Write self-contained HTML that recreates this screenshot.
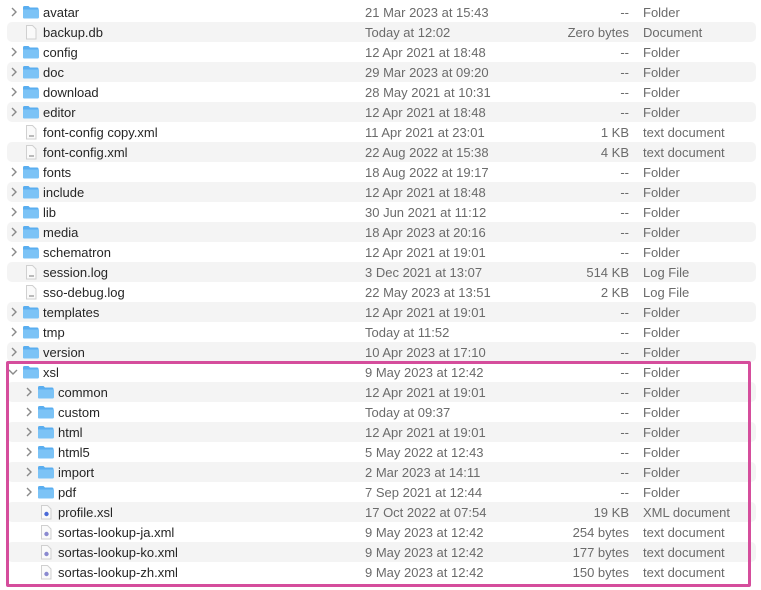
<!DOCTYPE html>
<html><head><meta charset="utf-8"><style>
body{margin:0;width:761px;height:590px;background:#fff;font-family:"Liberation Sans",sans-serif;font-size:13px;color:#262626;position:relative;overflow:hidden}
.r{position:absolute;left:7px;width:749px;height:20px;border-radius:5px}
.s{background:#f4f4f4}
.r span{position:absolute;top:3px;white-space:nowrap}
.d{left:358px;color:#6b6b6b}
.z{right:127px;color:#6b6b6b;text-align:right}
.k{left:636px;color:#6b6b6b}
.ch{position:absolute;top:5px}
.ic{position:absolute;top:2px}
#box{position:absolute;left:6px;top:361px;width:739px;height:220px;border:3px solid #d54d9c;border-radius:2px}
</style></head><body>
<div id="rows"></div>
<div id="box"></div>
<script>
var F=[[0,1,'avatar','21 Mar 2023 at 15:43','--','Folder'],[0,0,'backup.db','Today at 12:02','Zero bytes','Document','b'],[0,1,'config','12 Apr 2021 at 18:48','--','Folder'],[0,1,'doc','29 Mar 2023 at 09:20','--','Folder'],[0,1,'download','28 May 2021 at 10:31','--','Folder'],[0,1,'editor','12 Apr 2021 at 18:48','--','Folder'],[0,0,'font-config copy.xml','11 Apr 2021 at 23:01','1 KB','text document','t'],[0,0,'font-config.xml','22 Aug 2022 at 15:38','4 KB','text document','t'],[0,1,'fonts','18 Aug 2022 at 19:17','--','Folder'],[0,1,'include','12 Apr 2021 at 18:48','--','Folder'],[0,1,'lib','30 Jun 2021 at 11:12','--','Folder'],[0,1,'media','18 Apr 2023 at 20:16','--','Folder'],[0,1,'schematron','12 Apr 2021 at 19:01','--','Folder'],[0,0,'session.log','3 Dec 2021 at 13:07','514 KB','Log File','t'],[0,0,'sso-debug.log','22 May 2023 at 13:51','2 KB','Log File','t'],[0,1,'templates','12 Apr 2021 at 19:01','--','Folder'],[0,1,'tmp','Today at 11:52','--','Folder'],[0,1,'version','10 Apr 2023 at 17:10','--','Folder'],[0,2,'xsl','9 May 2023 at 12:42','--','Folder'],[1,1,'common','12 Apr 2021 at 19:01','--','Folder'],[1,1,'custom','Today at 09:37','--','Folder'],[1,1,'html','12 Apr 2021 at 19:01','--','Folder'],[1,1,'html5','5 May 2022 at 12:43','--','Folder'],[1,1,'import','2 Mar 2023 at 14:11','--','Folder'],[1,1,'pdf','7 Sep 2021 at 12:44','--','Folder'],[1,0,'profile.xsl','17 Oct 2022 at 07:54','19 KB','XML document','x'],[1,0,'sortas-lookup-ja.xml','9 May 2023 at 12:42','254 bytes','text document','x'],[1,0,'sortas-lookup-ko.xml','9 May 2023 at 12:42','177 bytes','text document','x'],[1,0,'sortas-lookup-zh.xml','9 May 2023 at 12:42','150 bytes','text document','x']];
var h='';
F.forEach(function(f,i){
 var o=f[0]*15, y=2+i*20;
 h+='<div class="r'+(i%2?' s':'')+'" style="top:'+y+'px">';
 if(f[1]==1)h+='<svg class="ch" style="left:'+(3+o)+'px" width="8" height="10"><path d="M2 1l4 4-4 4" fill="none" stroke="#8a8a8a" stroke-width="1.4"/></svg>';
 if(f[1]==2)h+='<svg class="ch" style="left:'+(1+o)+'px;top:6px" width="10" height="8"><path d="M1 2l4 4 4-4" fill="none" stroke="#8a8a8a" stroke-width="1.4"/></svg>';
 if(f[1])h+='<svg class="ic" style="left:'+(15+o)+'px" width="17" height="15"><path d="M1 3.5q0-1.5 1.5-1.5h4l1.5 1.5h7q1.5 0 1.5 1.5v8q0 1.5-1.5 1.5h-12.5q-1.5 0-1.5-1.5z" fill="#5aaef0"/><path d="M1 5.5h16v7.5q0 1.5-1.5 1.5h-13q-1.5 0-1.5-1.5z" fill="#7cc3f6"/></svg>';
 else{h+='<svg class="ic" style="left:'+(19+o)+'px;top:3px" width="11" height="15"><path d="M.5 .5h6l3.5 3.5v10h-9.5z" fill="#fafafa" stroke="#d0d0d0"/>'+(f[6]=='x'?'<circle cx="5.5" cy="9" r="2.2" fill="'+(i>25?'#8a8ad0':'#4a6ad8')+'"/>':f[6]=='t'?'<rect x="3" y="10" width="5" height="2" fill="#bbb"/>':'')+'</svg>';}
 h+='<span style="left:'+(36+o)+'px">'+f[2]+'</span><span class="d">'+f[3]+'</span><span class="z">'+f[4]+'</span><span class="k">'+f[5]+'</span></div>';
});
document.getElementById('rows').innerHTML=h;
</script>
</body></html>
